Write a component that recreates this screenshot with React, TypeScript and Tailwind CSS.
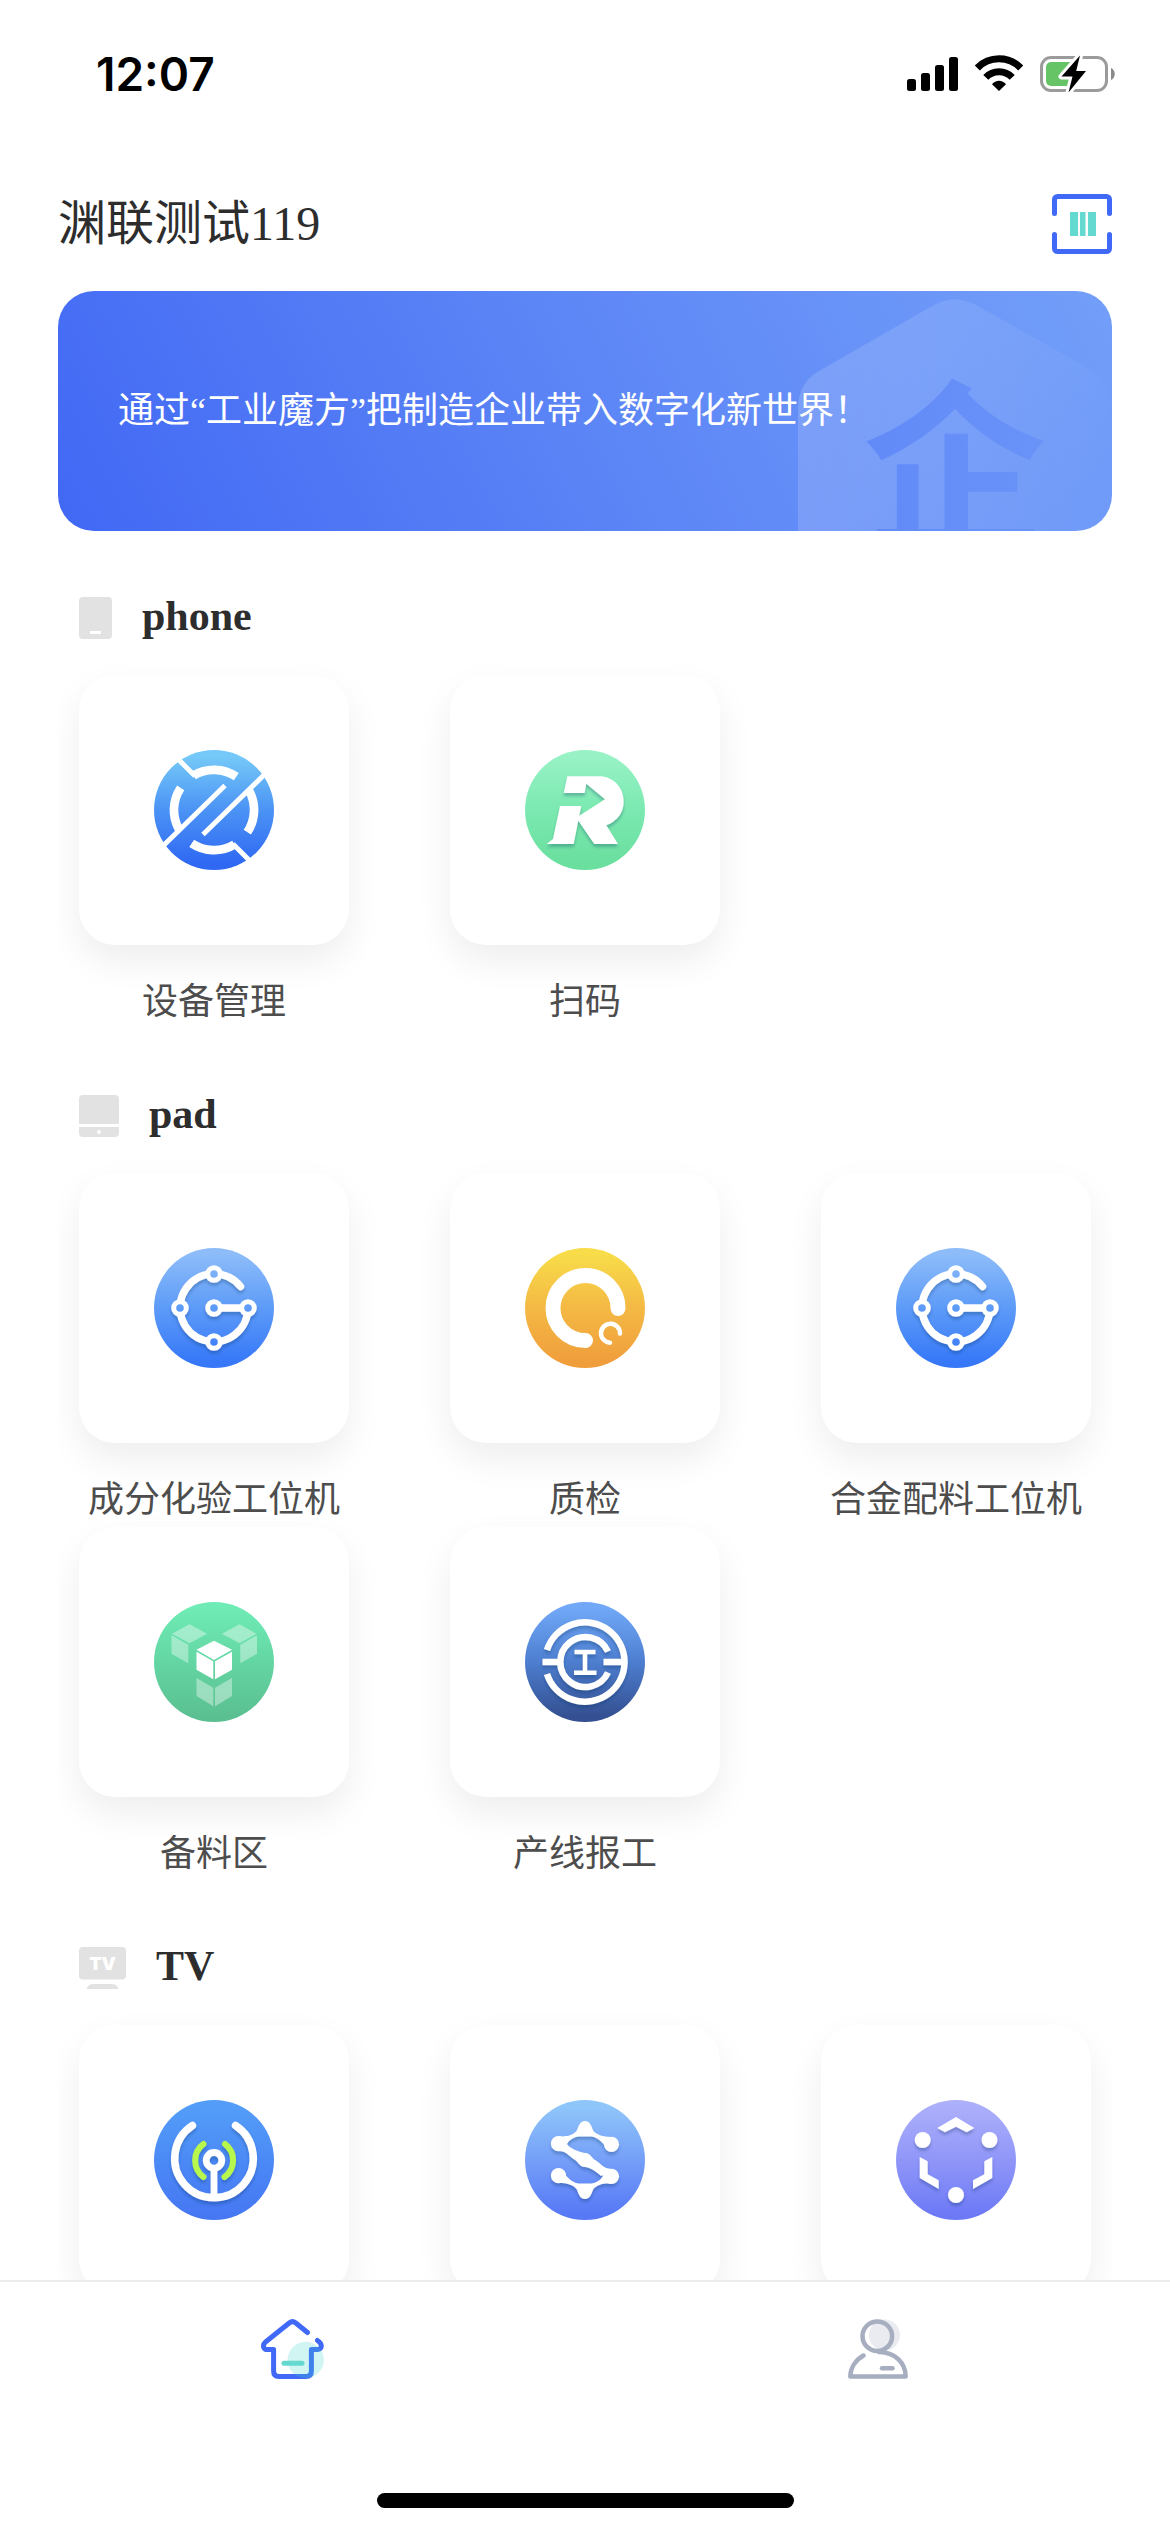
import type { ReactNode } from "react";

type BadgeProps = { id: string; stops: [string, string, string]; shadow?: boolean; children: ReactNode };

function Badge({ id, stops, shadow = true, children }: BadgeProps) {
  return (
    <svg viewBox="0 0 120 120" className="size-[120px]" aria-hidden="true">
      <defs>
        <linearGradient id={id} gradientUnits="userSpaceOnUse" x1="0" y1="0" x2="0" y2="120">
          <stop offset="0.05" stopColor={stops[0]} />
          <stop offset="0.5" stopColor={stops[1]} />
          <stop offset="0.95" stopColor={stops[2]} />
        </linearGradient>
        <filter id={`${id}-shadow`} x="-10%" y="-10%" width="120%" height="130%">
          <feDropShadow dx="0" dy="3" stdDeviation="1.5" floodColor="#0b2a5c" floodOpacity="0.28" />
        </filter>
      </defs>
      <circle cx="60" cy="60" r="60" fill={`url(#${id})`} />
      <g filter={shadow ? `url(#${id}-shadow)` : undefined}>{children}</g>
    </svg>
  );
}

function DeviceIcon() {
  return (
    <Badge id="device" stops={["#75c9f8", "#4b93f5", "#2f68f3"]} shadow={false}>
      <g fill="none" stroke="#fff" strokeWidth="8.7">
        <path d="M39.5 25.5A40 40 0 0 1 82.3 26.7" />
        <path d="M80.5 94.5A40 40 0 0 1 37.7 93.3" />
        <path d="M26.7 37.8A40 40 0 0 0 25 79.5" />
        <path d="M93.3 82.2A40 40 0 0 0 95 40.5" />
      </g>
      <g fill="none" stroke="#fff" strokeWidth="5">
        <path d="M24 9L41 26M96 111L79 94" />
        <path d="M9.5 95.5L71 35.5M110.5 24.5L49 84.5" />
      </g>
    </Badge>
  );
}

function ArrowRIcon() {
  return (
    <Badge id="arrow-r" stops={["#98f2c5", "#7be9b1", "#6adf9e"]}>
      <path
        fill="#fff"
        d="M42.3 26.3H74C88 26.3 98.7 37 98.7 51.7C98.7 62.5 92 71.5 81.3 75.3L93 94H69.3L53.3 70.7L48.7 94H21.7L28 89L35 56H56.3L54.3 65.7L80 49.3L61.3 33.7L59.7 43H38.7Z"
      />
    </Badge>
  );
}

function NodesIcon({ id }: { id: string }) {
  const fill = `url(#${id})`;
  return (
    <Badge id={id} stops={["#8dbcf9", "#5d9bf8", "#3678f8"]}>
      <g fill="none" stroke="#fff" strokeWidth="7.5">
        <path strokeLinecap="round" d="M86.5 38.5A34 34 0 1 0 94 60" />
        <path d="M60 60H94" />
      </g>
      <g fill={fill} stroke="#fff" strokeWidth="5">
        <circle cx="60" cy="26" r="6.3" />
        <circle cx="26" cy="60" r="6.3" />
        <circle cx="60" cy="60" r="6.3" />
        <circle cx="94" cy="60" r="6.3" />
        <circle cx="60" cy="94" r="6.3" />
      </g>
    </Badge>
  );
}

function QualityIcon() {
  return (
    <Badge id="quality" stops={["#f8dc49", "#f4b944", "#f09e3c"]} shadow={false}>
      <g fill="none" stroke="#fff" strokeLinecap="round">
        <path strokeWidth="15" d="M93 60.5A32.5 32.5 0 1 0 60.5 92.5" />
        <path strokeWidth="4.5" d="M95 85.5A9.5 9.5 0 1 0 85 94.7" />
      </g>
    </Badge>
  );
}

function CubesIcon() {
  return (
    <Badge id="cubes" stops={["#6febb5", "#64d6a3", "#5bc091"]} shadow={false}>
      <g fill="#fff">
        <path d="M60 38.7L78 47.7L60 58L42.5 47.7Z" />
        <path d="M42.5 49.7L59.3 59.3V77.3L42.5 67.7Z" />
        <path d="M61 59.3L78 49.7V67.7L61 77.3Z" />
        <g opacity="0.38">
          <path d="M35.5 22.3L53 31.7L35.5 41.3L18 31.7Z" />
          <path d="M17.5 33.3L34.3 42.7V61.3L17.5 51.7Z" />
          <path d="M85.5 22.3L102.5 31.7L85.5 41.3L68 31.7Z" />
          <path d="M103 33.3L86.3 42.7V61.3L103 51.7Z" />
          <path d="M42.5 76L59.3 85.7V104.3L42.5 94Z" />
          <path d="M78 76L61 85.7V104.3L78 94Z" />
        </g>
      </g>
    </Badge>
  );
}

function ReportIcon() {
  return (
    <Badge id="report" stops={["#71a8f8", "#4d7ecf", "#345092"]}>
      <g fill="none" stroke="#fff" strokeWidth="6.5">
        <path d="M22 48A39.700 39.700 0 1 1 22 72" />
        <path d="M83 49.500A25 25 0 1 0 83 70.500" />
        <path d="M17.500 60H35M78.500 60H101" />
        <path strokeWidth="4.5" d="M49.500 50H70.500M60 50V70.500M49 70.700H71.500" />
      </g>
    </Badge>
  );
}

function AntennaIcon() {
  return (
    <Badge id="antenna" stops={["#539df8", "#4b8af6", "#4678f3"]}>
      <g fill="none" strokeLinecap="round" stroke="#fff">
        <path strokeWidth="7.5" d="M38.500 25.500A39.300 39.300 0 1 0 81.500 25.500" />
        <path strokeWidth="6" stroke="#b8f84d" d="M49.500 44A20.500 20.500 0 0 0 49.500 77M71 44A20.500 20.500 0 0 1 70.500 77" />
        <circle strokeWidth="6.8" cx="60" cy="60.3" r="7.8" />
        <path strokeWidth="6.8" d="M60 70V96" />
      </g>
    </Badge>
  );
}

function ChainIcon() {
  return (
    <Badge id="chain" stops={["#8fc6fa", "#759ff8", "#5779f6"]}>
      <g fill="#fff">
        <path d="M60 21C54.500 21 53.500 27 51.500 31C48 35 42 37 33.500 36.300V51C41 51 44 56 50 60C53 62 54 66 60 67C64 67.500 70 70 76 76L87 69C78 69 76 64 70 60C67 58 66 54 60 53C54 52 44 48 42 44C44 40.500 49 36.500 54 36.500H66C71 36.500 76 41 79.500 45L86 36.900C78 36.900 72 35 68.500 31C66.500 27 65.500 21 60 21Z" />
        <path d="M60 99C65.500 99 66.500 93 68.500 89C72 85 78 83 86.500 83.700V69C79 69 76 64 70 60L66 66C70 68.500 76 72 78 76C76 79.500 71 83.500 66 83.500H54C49 83.500 44 79 40.500 75L34 83.100C42 83.100 48 85 51.500 89C53.500 93 54.500 99 60 99Z" />
        <circle cx="33.500" cy="43.700" r="7.600" />
        <circle cx="86.500" cy="44.300" r="7.600" />
        <circle cx="60" cy="60" r="7" />
        <circle cx="86.500" cy="76.300" r="7.600" />
        <circle cx="33.500" cy="75.700" r="7.600" />
      </g>
    </Badge>
  );
}

function HexTeamIcon() {
  return (
    <Badge id="hex-team" stops={["#acaffa", "#9096f8", "#6d7af6"]}>
      <g fill="#fff">
        <path d="M60 17L78.300 28L70.700 32.300L60 26.700L49 32.300L41.300 28Z" />
        <path d="M23.700 57L31.700 61.300V74.300L42.700 80.300V89L23.700 78Z" />
        <path d="M96.300 57L88.300 61.300V74.300L77 80.300V89L96.300 78Z" />
        <circle cx="26.7" cy="40" r="8" />
        <circle cx="93.5" cy="40" r="8" />
        <circle cx="60" cy="95" r="8" />
      </g>
    </Badge>
  );
}

function PhoneGlyph() {
  return (
    <svg viewBox="0 0 33 42" className="h-[42px] w-[33px]" aria-hidden="true">
      <rect width="33" height="42" rx="4" fill="#e2e2e2" />
      <rect x="11" y="34" width="11" height="3" fill="#fff" />
    </svg>
  );
}

function PadGlyph() {
  return (
    <svg viewBox="0 0 40 42" className="h-[42px] w-10" aria-hidden="true">
      <path fill="#e2e2e2" d="M4 0H36A4 4 0 0 1 40 4V29H0V4A4 4 0 0 1 4 0ZM0 32H40V38A4 4 0 0 1 36 42H4A4 4 0 0 1 0 38Z" />
      <circle cx="20" cy="37" r="2" fill="#fff" />
    </svg>
  );
}

function TvGlyph() {
  return (
    <svg viewBox="0 0 47 42" className="h-[42px] w-[47px]" aria-hidden="true">
      <rect width="47" height="32.5" rx="4" fill="#e2e2e2" />
      <path fill="#e2e2e2" d="M7.500 42C8.500 38.500 11 37 14 37H33C36 37 38.500 38.500 39.500 42Z" />
      <text x="23.5" y="23" textAnchor="middle" fill="#fff" className="font-['Inter',sans-serif] text-[18px] font-black">
        TV
      </text>
    </svg>
  );
}

type Tile = { key: string; icon: ReactNode; label?: string };
type Group = { title: string; glyph: ReactNode; tiles: Tile[] };

const groups: Group[] = [
  {
    title: "phone",
    glyph: <PhoneGlyph />,
    tiles: [
      { key: "device", icon: <DeviceIcon />, label: "设备管理" },
      { key: "scan", icon: <ArrowRIcon />, label: "扫码" },
    ],
  },
  {
    title: "pad",
    glyph: <PadGlyph />,
    tiles: [
      { key: "assay", icon: <NodesIcon id="assay" />, label: "成分化验工位机" },
      { key: "quality", icon: <QualityIcon />, label: "质检" },
      { key: "alloy", icon: <NodesIcon id="alloy" />, label: "合金配料工位机" },
      { key: "stock", icon: <CubesIcon />, label: "备料区" },
      { key: "report", icon: <ReportIcon />, label: "产线报工" },
    ],
  },
  {
    title: "TV",
    glyph: <TvGlyph />,
    tiles: [
      { key: "antenna", icon: <AntennaIcon /> },
      { key: "chain", icon: <ChainIcon /> },
      { key: "team", icon: <HexTeamIcon /> },
    ],
  },
];

function AppTile({ tile }: { tile: Tile }) {
  return (
    <button type="button" className="flex w-[270px] flex-col items-center">
      <span className="flex size-[270px] items-center justify-center rounded-[36px] bg-white shadow-[0_16px_36px_rgba(0,0,0,0.07)]">
        {tile.icon}
      </span>
      <span className="relative mt-[30px] h-[54px] text-4xl leading-[54px] whitespace-nowrap text-[#4d4d4d]">{tile.label}</span>
    </button>
  );
}

function TileGroup({ group }: { group: Group }) {
  return (
    <section className="overflow-x-clip px-[21px]">
      <div className="flex items-center gap-[30px] pt-[66px] pb-9">
        {group.glyph}
        <h2 className="pb-1 text-[42px] leading-[38px] font-bold text-[#2d2d2d]">{group.title}</h2>
      </div>
      <div className="grid grid-cols-[repeat(3,270px)] justify-between">
        {group.tiles.map((tile) => (
          <AppTile key={tile.key} tile={tile} />
        ))}
      </div>
    </section>
  );
}

function StatusBar() {
  return (
    <div className="flex h-[141px] shrink-0 items-start justify-between pt-[55px] pr-[55px] pl-24">
      <time className="font-['Inter',sans-serif] text-[46px] leading-[38px] font-semibold text-black">12:07</time>
      <div className="flex items-start gap-[17px]" aria-hidden="true">
        <svg viewBox="0 0 51 37" className="h-[37px] w-[51px]">
          <rect x="0" y="24" width="9" height="12" rx="2.5" />
          <rect x="14" y="18" width="9" height="18" rx="2.5" />
          <rect x="28" y="10" width="9" height="26" rx="2.5" />
          <rect x="42" y="2" width="9" height="34" rx="2.5" />
        </svg>
        <svg viewBox="0 0 48 37" className="h-[37px] w-12">
          <g fill="none" stroke="#000">
            <path strokeWidth="7" d="M2.300 13A30.200 30.200 0 0 1 45.700 13" />
            <path strokeWidth="7" d="M10.800 22.300A18.300 18.300 0 0 1 37.200 22.300" />
          </g>
          <path d="M17 29.200C20.500 24.500 27.500 24.500 31 29.200L24 36Z" />
        </svg>
        <svg viewBox="0 0 75 37" className="h-[37px] w-[75px] overflow-visible">
          <rect x="1.5" y="2.5" width="65" height="33" rx="9.5" fill="none" stroke="#9b9b9b" strokeWidth="3" />
          <path fill="#67c466" d="M11 7H31V31H11A5 5 0 0 1 6 26V12A5 5 0 0 1 11 7Z" />
          <path fill="#8b8b8b" d="M71 13C76 15 76 23 71 25Z" />
          <path
            d="M40 0.500L21.500 21.500H32.500L28.500 37.500L46 16H36.200Z"
            stroke="#fff"
            strokeWidth="6"
            strokeLinejoin="round"
            paintOrder="stroke"
          />
        </svg>
      </div>
    </div>
  );
}

function ScanGlyph() {
  return (
    <svg viewBox="0 0 60 60" className="size-[60px]" aria-hidden="true">
      <g fill="none" stroke="#4169f7" strokeWidth="5" strokeLinecap="round">
        <path d="M2.500 19.500V5.500A3 3 0 0 1 5.500 2.500H54.500A3 3 0 0 1 57.500 5.500V19.500" />
        <path d="M2.500 40.500V54.500A3 3 0 0 0 5.500 57.500H54.500A3 3 0 0 0 57.500 54.500V40.500" />
      </g>
      <path fill="#63d9cf" d="M18 18H26V42H18ZM28 18H33.500V42H28ZM36 18H44V42H36Z" />
    </svg>
  );
}

function HomeGlyph() {
  return (
    <svg viewBox="0 0 63 60" className="h-[60px] w-[63px]" aria-hidden="true">
      <path
        fill="none"
        stroke="#4169f7"
        strokeWidth="5"
        strokeLinecap="round"
        strokeLinejoin="round"
        d="M46.500 13.500L34.500 3.700Q31.500 1.500 28.500 3.700L4.500 23C0.500 27 3 31 7 30.500H12.600V52Q12.600 57.500 18 57.500H45Q50.400 57.500 50.400 52V30.500H56.500C60.500 30.500 62.500 25.500 56.500 21.500"
      />
      <circle cx="44.7" cy="41" r="18.2" fill="#3fd4c8" opacity="0.24" />
      <path stroke="#63d9cf" strokeWidth="5" strokeLinecap="round" d="M23 44.300H41" />
    </svg>
  );
}

function PersonGlyph() {
  return (
    <svg viewBox="0 0 60 60" className="size-[60px]" aria-hidden="true">
      <circle cx="36.5" cy="16" r="15.5" fill="#e9ebf0" />
      <g fill="none" stroke="#a7aec0" strokeWidth="4.5" strokeLinecap="round" strokeLinejoin="round">
        <circle cx="29.3" cy="17.2" r="14.8" />
        <path d="M15.500 36.500C7.500 41 2.500 49 2.300 57.600H57.700C57.500 44 47 33 31 33" />
        <path d="M34 49.300H44.500" />
      </g>
    </svg>
  );
}

function BannerMark() {
  return (
    <svg viewBox="0 0 314 240" className="absolute top-0 right-0 h-60 w-[314px]" aria-hidden="true">
      <defs>
        <linearGradient id="mark-plate" x1="0" y1="0" x2="1" y2="0">
          <stop offset="0" stopColor="#fff" stopOpacity="0.15" />
          <stop offset="0.5" stopColor="#fff" stopOpacity="0.1" />
          <stop offset="1" stopColor="#fff" stopOpacity="0.01" />
        </linearGradient>
        <linearGradient id="mark-glyph" x1="0" y1="0" x2="1" y2="0">
          <stop offset="0" stopColor="#618af8" />
          <stop offset="1" stopColor="#6a93f8" />
        </linearGradient>
      </defs>
      <path fill="url(#mark-plate)" d="M136 14Q157 3 178 14L292 78Q313 92 313 118V240H0V118Q0 92 21 80Z" />
      <text
        x="157"
        y="246"
        textAnchor="middle"
        fill="url(#mark-glyph)"
        className="font-['Noto_Sans_CJK_SC',sans-serif] text-[184px] font-bold"
      >
        企
      </text>
    </svg>
  );
}

export default function App() {
  return (
    <div className="flex h-screen flex-col overflow-hidden bg-white font-['Liberation_Serif','Noto_Sans_CJK_SC',serif]">
      <StatusBar />
      <main className="min-h-0 flex-1 overflow-y-auto px-[58px] [scrollbar-width:none]">
        <header className="flex items-center justify-between pt-[53px] pb-[37px]">
          <h1 className="text-5xl leading-[60px] text-[#2d2d2d]">渊联测试119</h1>
          <button type="button" aria-label="扫描">
            <ScanGlyph />
          </button>
        </header>
        <div className="relative flex h-60 items-center overflow-hidden rounded-[36px] bg-[linear-gradient(62deg,#4168f4_0%,#5c85f6_50%,#739ff9_100%)] px-[60px]">
          <BannerMark />
          <p className="relative text-4xl text-white">通过“工业魔方”把制造企业带入数字化新世界！</p>
        </div>
        {groups.map((group) => (
          <TileGroup key={group.title} group={group} />
        ))}
      </main>
      <footer className="flex h-[252px] shrink-0 flex-col items-center justify-between border-t-2 border-[#ececee] bg-white pb-6">
        <nav className="grid w-full grid-cols-2 justify-items-center pt-[37px]">
          <button type="button" aria-label="首页" aria-current="page">
            <HomeGlyph />
          </button>
          <button type="button" aria-label="我的">
            <PersonGlyph />
          </button>
        </nav>
        <div className="h-[15px] w-[417px] rounded-full bg-black" />
      </footer>
    </div>
  );
}
